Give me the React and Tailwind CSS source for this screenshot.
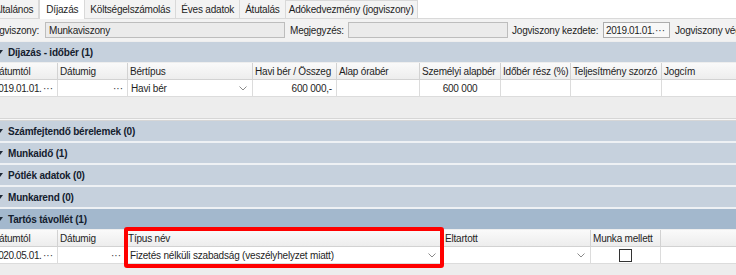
import React from 'react';

function Chevron() {
  return (
    <svg width="8" height="5" viewBox="0 0 8 5" className="shrink-0">
      <path d="M0.5 0.5 L4 4 L7.5 0.5" fill="none" stroke="#8a8a8a" strokeWidth="1" />
    </svg>
  );
}

function Dots() {
  return <span className="shrink-0 pr-[4px] text-[#333] tracking-[0px]">···</span>;
}

function GroupHeader({ title, active }) {
  return (
    <div
      className={`relative flex h-[20px] shrink-0 items-center pl-[8px] font-bold text-[#14202e] ${
        active ? 'bg-[#a3b8cd]' : 'bg-[#c6d1dd]'
      }`}
    >
      <span className="absolute left-[-3px] top-[8px] h-0 w-0 border-l-[3px] border-r-[3px] border-t-[4px] border-l-transparent border-r-transparent border-t-[#1c2735]" />
      {title}
    </div>
  );
}

function HeadCell({ w, children }) {
  return (
    <div
      className="flex h-full shrink-0 items-center overflow-hidden whitespace-nowrap border-r border-[#d2d2d2] bg-gradient-to-b from-[#fafafa] to-[#ededed] pl-[2px]"
      style={{ width: w }}
    >
      {children}
    </div>
  );
}

function Cell({ w, className = '', children }) {
  return (
    <div
      className={`flex h-full shrink-0 items-center overflow-hidden whitespace-nowrap border-r border-[#dcdcdc] bg-white ${className}`}
      style={{ width: w }}
    >
      {children}
    </div>
  );
}

export default function App() {
  const w1 = [68, 70, 125, 84, 83, 81, 70, 91, 90];
  const w2 = [68, 68, 317, 148, 70, 100];

  return (
    <div className="relative flex h-[275px] w-[736px] flex-col overflow-hidden bg-[#eeeeee] font-['Liberation_Sans',Arial,sans-serif] text-[10px] tracking-[-0.2px] text-[#1e1e1e]">
      {/* Tabs */}
      <div className="flex h-[19px] shrink-0 items-end border-b border-[#d9d9d9] bg-white">
        <div className="ml-[-8px] flex h-[18px] items-center border-r border-[#d9d9d9] bg-[#f3f3f3] pl-[2px] pr-[5px]">Általános</div>
        <div className="mb-[-1px] flex h-[20px] items-center border-x border-t border-[#d9d9d9] bg-white px-[6px]">Díjazás</div>
        <div className="flex h-[18px] items-center border-r border-[#d9d9d9] bg-[#f3f3f3] px-[5px]">Költségelszámolás</div>
        <div className="flex h-[18px] items-center border-r border-[#d9d9d9] bg-[#f3f3f3] px-[5px]">Éves adatok</div>
        <div className="flex h-[18px] items-center border-r border-[#d9d9d9] bg-[#f3f3f3] px-[5px]">Átutalás</div>
        <div className="flex h-[18px] items-center border-r border-t border-[#d9d9d9] bg-[#f3f3f3] px-[3px]">Adókedvezmény (jogviszony)</div>
      </div>

      {/* Form row */}
      <div className="flex h-[22px] shrink-0 items-center whitespace-nowrap bg-[#f2f2f2]">
        <div className="ml-[-11px] w-[56px] shrink-0">Jogviszony:</div>
        <div className="flex h-[16px] w-[240px] shrink-0 items-center border border-[#bdbdbd] bg-[#ebebeb] pl-[3px]">Munkaviszony</div>
        <div className="ml-[5px] w-[58px] shrink-0">Megjegyzés:</div>
        <div className="h-[16px] w-[160px] shrink-0 border border-[#bdbdbd] bg-[#ebebeb]" />
        <div className="ml-[4px] w-[91px] shrink-0">Jogviszony kezdete:</div>
        <div className="flex h-[16px] w-[67px] shrink-0 items-center justify-between border border-[#adadad] bg-[#f8f8f8] pl-[2px]">
          <span className="tracking-[-0.4px]">2019.01.01.</span>
          <Dots />
        </div>
        <div className="ml-[5px] shrink-0">Jogviszony vége:</div>
      </div>

      {/* Díjazás - időbér */}
      <div className="mt-px">
        <GroupHeader title="Díjazás - időbér (1)" />
      </div>
      <div className="mt-px ml-[-10px] flex h-[17px] shrink-0 border-b border-[#d2d2d2]">
        <HeadCell w={w1[0]}>Dátumtól</HeadCell>
        <HeadCell w={w1[1]}>Dátumig</HeadCell>
        <HeadCell w={w1[2]}>Bértípus</HeadCell>
        <HeadCell w={w1[3]}>Havi bér / Összeg</HeadCell>
        <HeadCell w={w1[4]}>Alap órabér</HeadCell>
        <HeadCell w={w1[5]}>Személyi alapbér</HeadCell>
        <HeadCell w={w1[6]}>Időbér rész (%)</HeadCell>
        <HeadCell w={w1[7]}>Teljesítmény szorzó</HeadCell>
        <HeadCell w={w1[8]}>Jogcím</HeadCell>
      </div>
      <div className="ml-[-10px] flex h-[17px] shrink-0 border-b border-[#dcdcdc]">
        <Cell w={w1[0]} className="justify-between pl-[3px]">
          <span className="tracking-[-0.4px]">2019.01.01.</span>
          <Dots />
        </Cell>
        <Cell w={w1[1]} className="justify-end">
          <Dots />
        </Cell>
        <Cell w={w1[2]} className="justify-between pl-[3px] pr-[5px]">
          <span>Havi bér</span>
          <Chevron />
        </Cell>
        <Cell w={w1[3]} className="justify-end pr-[4px]">600 000,-</Cell>
        <Cell w={w1[4]} />
        <Cell w={w1[5]} className="justify-center">600 000</Cell>
        <Cell w={w1[6]} />
        <Cell w={w1[7]} />
        <Cell w={w1[8]} />
      </div>
      <div className="h-[21px] shrink-0 bg-[#ededed]" />
      <div className="h-[3px] shrink-0 border-y border-[#d6d6d6] bg-[#f7f7f7]" />

      {/* Collapsed groups */}
      <div className="flex shrink-0 flex-col gap-[2px] bg-[#eef1f4]">
        <GroupHeader title="Számfejtendő bérelemek (0)" />
        <GroupHeader title="Munkaidő (1)" />
        <GroupHeader title="Pótlék adatok (0)" />
        <GroupHeader title="Munkarend (0)" />
        <GroupHeader title="Tartós távollét (1)" active />
      </div>

      {/* Tartós távollét table */}
      <div className="mt-px ml-[-10px] flex h-[17px] shrink-0 border-b border-[#d2d2d2]">
        <HeadCell w={w2[0]}>Dátumtól</HeadCell>
        <HeadCell w={w2[1]}>Dátumig</HeadCell>
        <HeadCell w={w2[2]}>Típus név</HeadCell>
        <HeadCell w={w2[3]}>Eltartott</HeadCell>
        <HeadCell w={w2[4]}>Munka mellett</HeadCell>
        <HeadCell w={w2[5]} />
      </div>
      <div className="ml-[-10px] flex h-[17px] shrink-0 border-b border-[#dcdcdc]">
        <Cell w={w2[0]} className="justify-between pl-[3px]">
          <span className="tracking-[-0.4px]">2020.05.01.</span>
          <Dots />
        </Cell>
        <Cell w={w2[1]} className="justify-end">
          <Dots />
        </Cell>
        <Cell w={w2[2]} className="justify-between pl-[4px] pr-[6px]">
          <span>Fizetés nélküli szabadság (veszélyhelyzet miatt)</span>
          <Chevron />
        </Cell>
        <Cell w={w2[3]} className="justify-end pr-[5px]">
          <Chevron />
        </Cell>
        <Cell w={w2[4]} className="justify-center">
          <span className="h-[13px] w-[13px] border border-[#333] bg-white" />
        </Cell>
        <Cell w={w2[5]} />
      </div>
      <div className="flex-1 bg-[#ededed]" />

      {/* Red highlight */}
      <div className="absolute left-[124px] top-[227px] h-[41px] w-[320px] rounded-[3px] border-[4px] border-[#ff0000]" />
    </div>
  );
}
